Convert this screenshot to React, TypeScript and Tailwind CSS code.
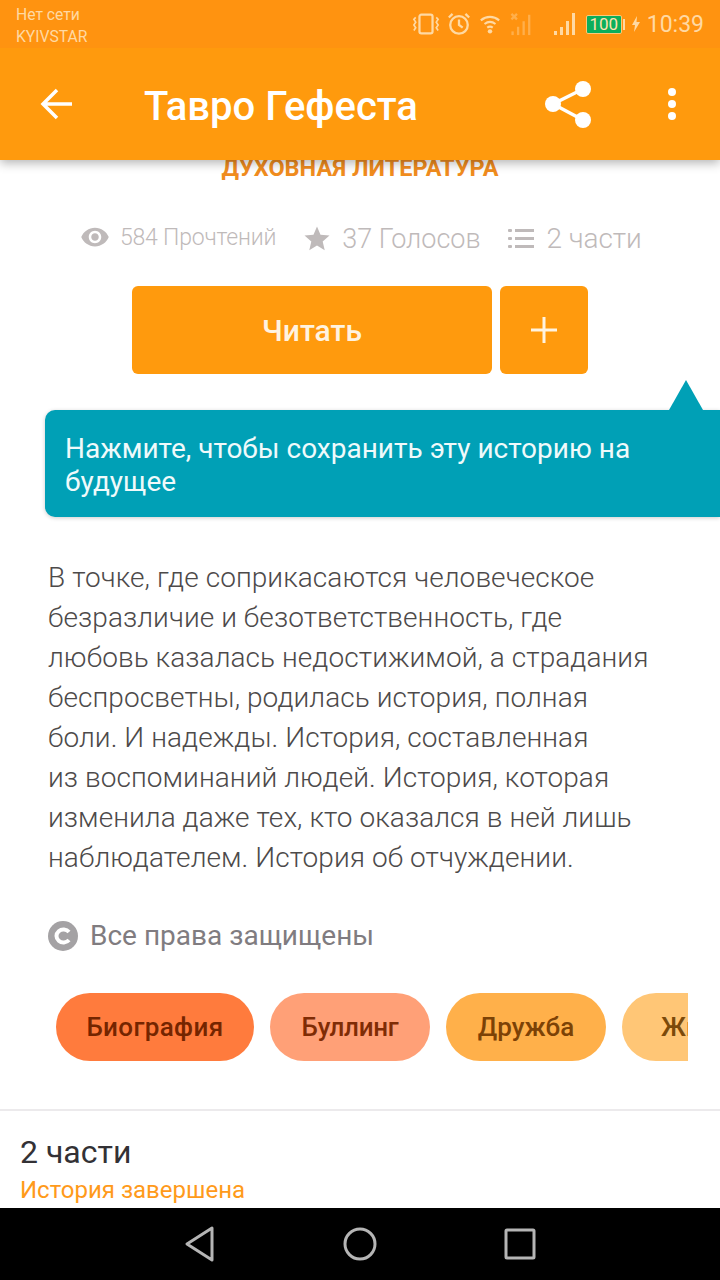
import React from "react";

const font = { fontFamily: "Roboto, 'Noto Sans', sans-serif" };

function StatusIcons() {
  return (
    <div className="flex items-center text-[#ffd9a3]">
      <svg width="28" height="24" viewBox="0 0 30 24" fill="none" stroke="currentColor" strokeWidth="2.400">
        <rect x="8" y="2" width="14" height="20" rx="2" />
        <path d="M4 5l-2 2 2 3-2 3 2 3 -2 3M26 5l2 2-2 3 2 3-2 3 2 3" strokeWidth="1.800" />
      </svg>
      <svg className="ml-[7px]" width="24" height="24" viewBox="0 0 26 26" fill="none" stroke="currentColor" strokeWidth="2.500">
        <circle cx="13" cy="14" r="9.500" />
        <path d="M13 8v6l4 3M2 6l4-4M24 6l-4-4" />
      </svg>
      <svg className="ml-[8px]" width="22" height="22" viewBox="0 0 24 24" fill="none" stroke="currentColor" strokeWidth="2.300">
        <path d="M2 8c6-5 14-5 20 0M6 12c4-3 8-3 12 0M9 16c2-1.500 4-1.500 6 0" />
        <circle cx="12" cy="20" r="2.400" fill="currentColor" stroke="none" />
      </svg>
      <svg className="ml-[9px] opacity-40" width="25" height="24" viewBox="0 0 26 26" fill="currentColor">
        <path d="M1 2l6 6M7 2l-6 6" stroke="currentColor" strokeWidth="2.500" />
        <rect x="1" y="21" width="2.500" height="4" />
        <rect x="7" y="16" width="2.500" height="9" />
        <rect x="13" y="10" width="2.500" height="15" />
        <rect x="19" y="3" width="2.500" height="22" />
      </svg>
      <svg className="ml-[18px]" width="24" height="24" viewBox="0 0 24 24" fill="currentColor">
        <rect x="1" y="19" width="3" height="4" />
        <rect x="7" y="15" width="3" height="8" />
        <rect x="13" y="9" width="3" height="14" />
        <rect x="19" y="1" width="3" height="22" />
      </svg>
      <div className="ml-[9px] flex items-center">
        <div className="flex h-[19px] w-[36px] items-center justify-center rounded-[2px] border border-[#ffc777] bg-[#0cae5b] text-[17px] leading-none text-[#ffe2b0]">
          100
        </div>
        <div className="ml-[1px] h-[11px] w-[2px] bg-[#ffd9a3]" />
      </div>
      <svg className="ml-[7px]" width="8" height="16" viewBox="0 0 8 16" fill="currentColor">
        <path d="M5 0L0 9h3l-1 7 6-10H4.500z" />
      </svg>
      <span className="ml-[7px] text-[23px] leading-none">10:39</span>
    </div>
  );
}

function Stats() {
  return (
    <div className="mt-[43px] flex items-center justify-start pl-[80px] text-[#bfbaba]">
      <svg width="30" height="30" viewBox="0 0 24 24" fill="currentColor" className="-mt-[4px]">
        <path d="M12 4.500C7 4.500 2.730 7.610 1 12c1.730 4.390 6 7.500 11 7.500s9.270-3.110 11-7.500c-1.730-4.390-6-7.500-11-7.500zM12 17c-2.760 0-5-2.240-5-5s2.240-5 5-5 5 2.240 5 5-2.240 5-5 5zm0-8c-1.660 0-3 1.340-3 3s1.340 3 3 3 3-1.340 3-3-1.340-3-3-3z" />
      </svg>
      <span className="-mt-[4px] ml-[10px] text-[23px] leading-none tracking-[-0.2px] font-light">584 Прочтений</span>
      <svg className="ml-[26px]" width="30" height="30" viewBox="0 0 24 24" fill="currentColor">
        <path d="M12 17.270L18.180 21l-1.640-7.030L22 9.240l-7.190-.610L12 2 9.190 8.630 2 9.240l5.460 4.730L5.820 21z" />
      </svg>
      <span className="ml-[10px] text-[27px] leading-none font-light">37 Голосов</span>
      <svg className="ml-[26px]" width="28" height="24" viewBox="0 0 28 24" fill="currentColor">
        <rect x="1" y="2" width="4" height="3" rx="1" />
        <rect x="1" y="10" width="4" height="3" rx="1" />
        <rect x="1" y="18" width="4" height="3" rx="1" />
        <rect x="8" y="2" width="19" height="3" />
        <rect x="8" y="10" width="19" height="3" />
        <rect x="8" y="18" width="19" height="3" />
      </svg>
      <span className="ml-[12px] text-[28px] leading-none font-light tracking-[-0.1px]">2 части</span>
    </div>
  );
}

export default function App() {
  return (
    <div style={font} className="flex h-[1280px] w-[720px] flex-col overflow-hidden bg-white">
      <div className="relative z-10 shadow-[0_3px_10px_rgba(0,0,0,0.3)]">
        <div className="flex h-12 items-center justify-between bg-[#ff9310] pl-4 pr-[16px]">
          <div className="pt-[3px] text-[15.700px] leading-[22px] text-[#ffd9a3]">
            <div>Нет сети</div>
            <div>KYIVSTAR</div>
          </div>
          <StatusIcons />
        </div>
        <div className="flex h-[112px] items-center bg-[#ff9a0d] text-white">
          <svg className="ml-10" width="32" height="32" viewBox="0 0 32 32" fill="none" stroke="currentColor" strokeWidth="3.500">
            <path d="M32 16H3M17 2L3 16l14 14" />
          </svg>
          <div className="ml-[72px] flex-1 pt-[6px] text-[40px] font-medium leading-none">Тавро Гефеста</div>
          <svg className="-mt-[1px]" width="48" height="48" viewBox="0 0 48 48" fill="currentColor" stroke="currentColor">
            <circle cx="9" cy="24" r="8" stroke="none" />
            <circle cx="39" cy="9" r="8" stroke="none" />
            <circle cx="39" cy="40" r="8" stroke="none" />
            <path d="M9 24L39 9M9 24l30 16" strokeWidth="3.500" />
          </svg>
          <div className="ml-[76px] mr-[44px] flex flex-col gap-[4px]">
            <div className="h-2 w-2 rounded-full bg-white" />
            <div className="h-2 w-2 rounded-full bg-white" />
            <div className="h-2 w-2 rounded-full bg-white" />
          </div>
        </div>
      </div>

      <main className="min-h-0 flex-1 overflow-hidden">
        <div className="-mt-[5px] text-center text-[23.500px] font-bold uppercase leading-[26px] text-[#f08c1e]">
          Духовная литература
        </div>

        <Stats />

        <div className="mt-[32px] flex justify-center gap-2">
          <div className="flex h-[88px] w-[360px] items-center justify-center rounded-[6px] bg-[#ff9a0d] text-[30px] font-medium text-[#fff3e0]">
            Читать
          </div>
          <div className="flex h-[88px] w-[88px] items-center justify-center rounded-[6px] bg-[#ff9a0d]">
            <svg width="26" height="26" viewBox="0 0 26 26" stroke="#fff3e0" strokeWidth="3">
              <path d="M13 0v26M0 13h26" />
            </svg>
          </div>
        </div>

        <div className="relative ml-[45px] mt-[36px] h-[107px] rounded-l-[10px] bg-[#00a0b6] pl-5 pt-[22px] text-[28px] leading-[33px] text-[#effafb] shadow-[0_1px_4px_rgba(0,0,0,0.2)]">
          <svg className="absolute right-[17px] top-[-30px]" width="34" height="30" viewBox="0 0 34 30" fill="#00a0b6">
            <path d="M17 0l17 30H0z" />
          </svg>
          Нажмите, чтобы сохранить эту историю на
          <br />
          будущее
        </div>

        <p className="ml-12 mt-[41px] text-[28px] font-light leading-10 tracking-[0.07px] text-[#4d4a4a]">
          В точке, где соприкасаются человеческое
          <br />
          безразличие и безответственность, где
          <br />
          любовь казалась недостижимой, а страдания
          <br />
          беспросветны, родилась история, полная
          <br />
          боли. И надежды. История, составленная
          <br />
          из воспоминаний людей. История, которая
          <br />
          изменила даже тех, кто оказался в ней лишь
          <br />
          наблюдателем. История об отчуждении.
        </p>

        <div className="ml-12 mt-[42px] flex h-8 items-center text-[28px] text-[#807c80]">
          <svg width="30" height="30" viewBox="0 0 30 30">
            <circle cx="15" cy="15" r="15" fill="#a4a2a4" />
            <path d="M21 11a7 6.500 0 1 0 0 8" fill="none" stroke="#fff" strokeWidth="4" />
          </svg>
          <span className="ml-3">Все права защищены</span>
        </div>

        <div className="ml-14 mt-[41px] flex w-[632px] gap-4 overflow-hidden text-[26px] font-medium">
          <div className="flex h-[68px] w-[198px] shrink-0 items-center justify-center rounded-[34px] bg-[#ff7b3d] tracking-[0.4px] text-[#742500]">Биография</div>
          <div className="flex h-[68px] w-40 shrink-0 items-center justify-center rounded-[34px] bg-[#ffa077] tracking-[-0.3px] text-[#7f2c05]">Буллинг</div>
          <div className="flex h-[68px] w-40 shrink-0 items-center justify-center rounded-[34px] bg-[#ffb04a] text-[#7c4206]">Дружба</div>
          <div className="flex h-[68px] w-40 shrink-0 items-center justify-start rounded-[34px] bg-[#ffc676] pl-[39px] text-[#7c4a0a]">Жизнь</div>
        </div>

        <div className="mt-[48px] h-[2px] bg-[#eceaec]" />

        <div className="pl-5 pt-[22px]">
          <div className="text-[32px] leading-[38px] text-[#333135]">2 части</div>
          <div className="mt-[5px] text-[24px] leading-[28px] text-[#ff9a1a]">История завершена</div>
        </div>
      </main>

      <nav className="flex h-[72px] items-center justify-center gap-[127px] bg-black">
        <svg width="32" height="36" viewBox="0 0 32 36" fill="none" stroke="#b5b5b5" strokeWidth="3" strokeLinejoin="round">
          <path d="M28 2v32L3 18z" />
        </svg>
        <svg width="34" height="34" viewBox="0 0 34 34" fill="none" stroke="#b5b5b5" strokeWidth="3">
          <circle cx="17" cy="17" r="15" />
        </svg>
        <svg width="32" height="32" viewBox="0 0 32 32" fill="none" stroke="#b5b5b5" strokeWidth="3" strokeLinejoin="round">
          <rect x="2" y="2" width="28" height="28" rx="1" />
        </svg>
      </nav>
    </div>
  );
}
